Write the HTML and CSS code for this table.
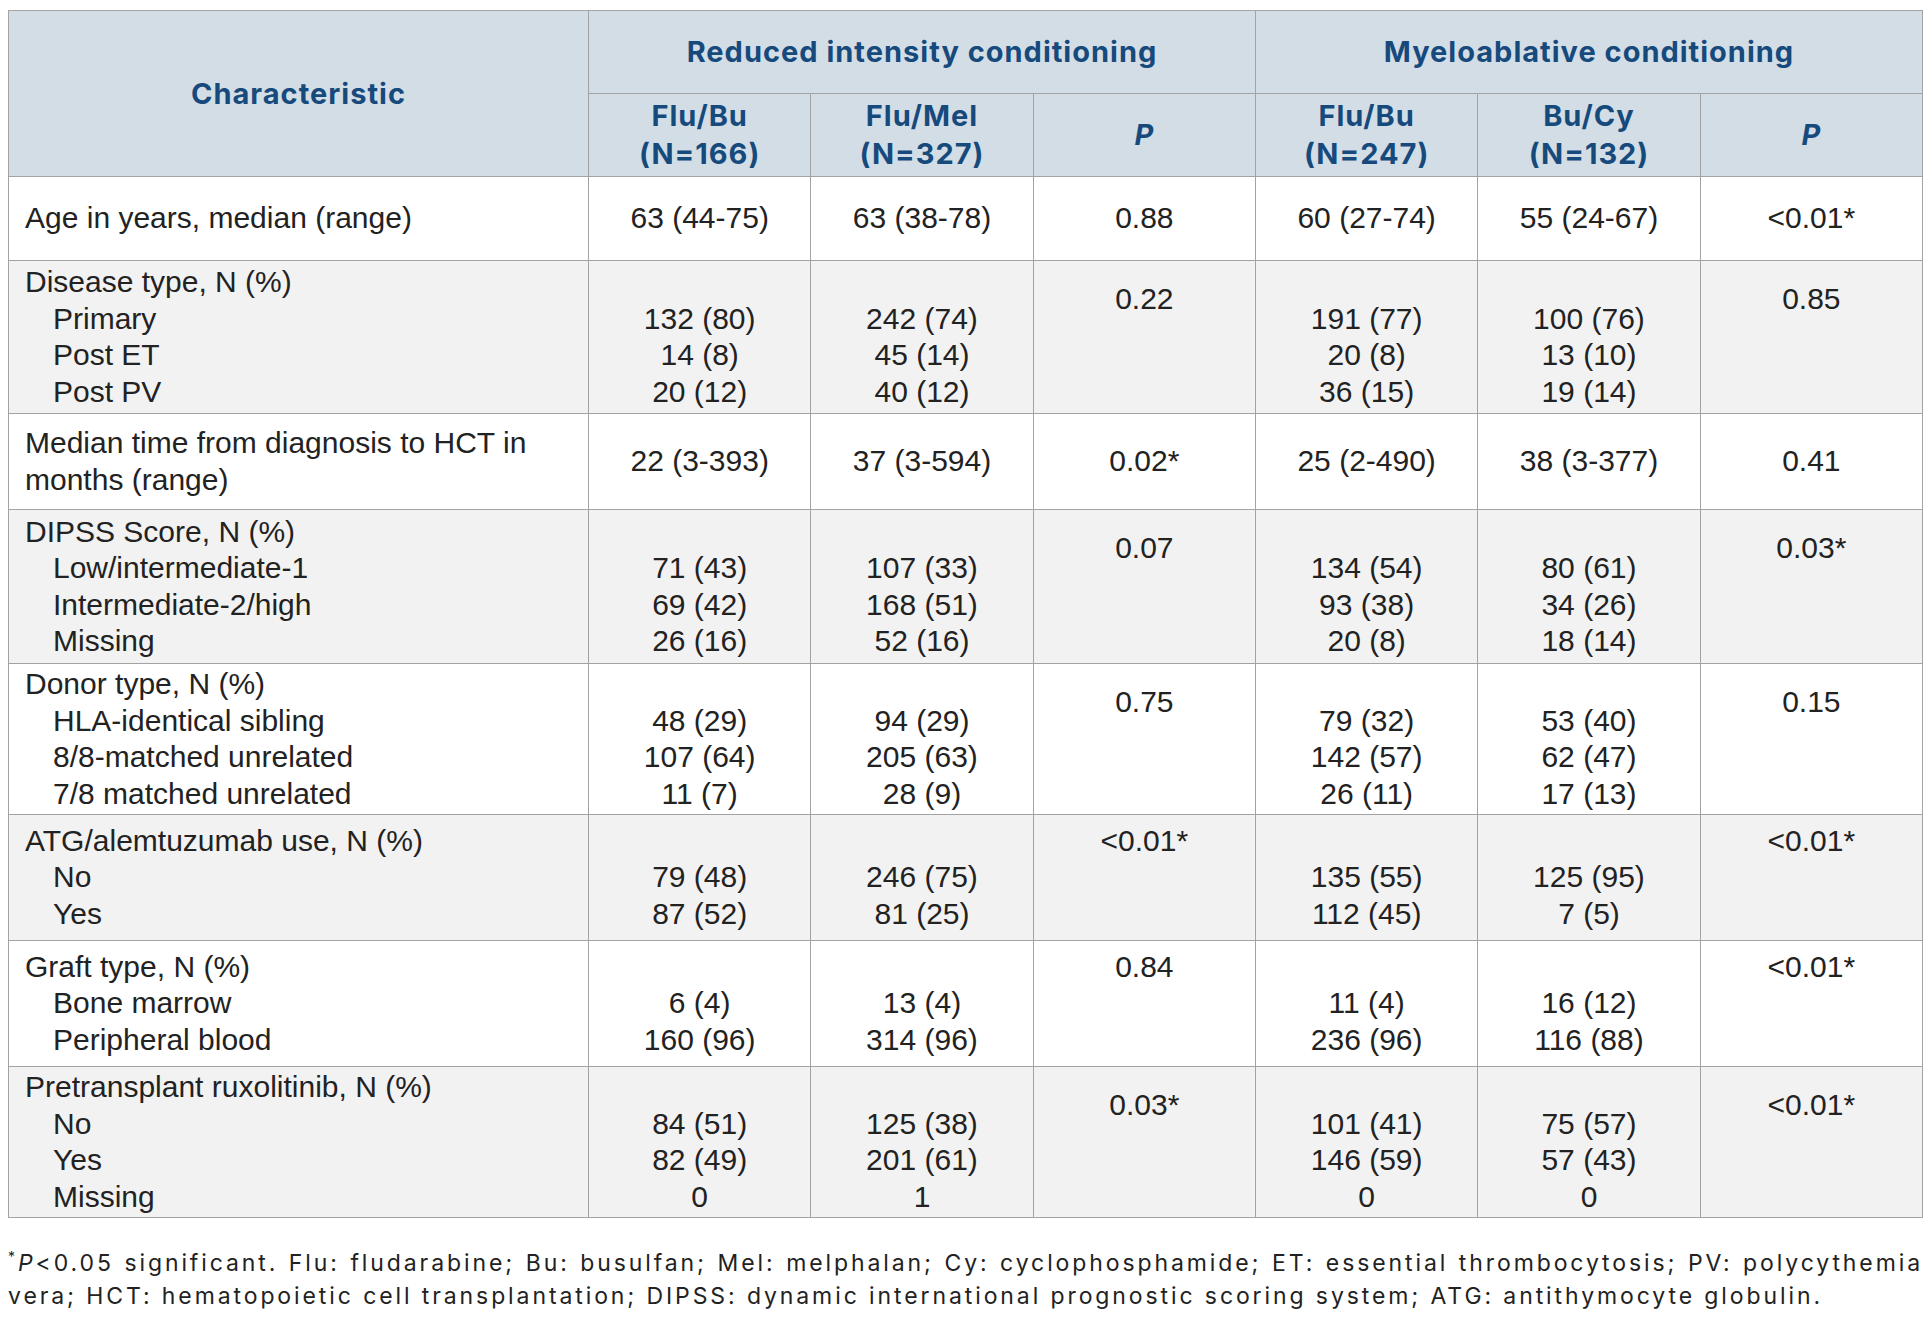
FILE: index.html
```html
<!DOCTYPE html>
<html lang="en">
<head>
<meta charset="utf-8">
<title>Patient characteristics</title>
<link rel="stylesheet" href="styles.css">
</head>
<body>
<div class="page">
<table class="tbl">
  <colgroup>
    <col class="c-char">
    <col><col><col><col><col><col>
  </colgroup>
  <thead>
    <tr class="h1">
      <th rowspan="2" class="th-char">Characteristic</th>
      <th colspan="3">Reduced intensity conditioning</th>
      <th colspan="3">Myeloablative conditioning</th>
    </tr>
    <tr class="h2">
      <th>Flu/Bu<br>(N=166)</th>
      <th>Flu/Mel<br>(N=327)</th>
      <th><i>P</i></th>
      <th>Flu/Bu<br>(N=247)</th>
      <th>Bu/Cy<br>(N=132)</th>
      <th><i>P</i></th>
    </tr>
  </thead>
  <tbody>
    <tr class="r-age white">
      <td class="lbl">Age in years, median (range)</td>
      <td>63 (44-75)</td>
      <td>63 (38-78)</td>
      <td class="pv-c">0.88</td>
      <td>60 (27-74)</td>
      <td>55 (24-67)</td>
      <td class="pv-c">&lt;0.01*</td>
    </tr>
    <tr class="r-dis grey">
      <td class="lbl">Disease type, N (%)<br><span class="sub">Primary</span><br><span class="sub">Post ET</span><br><span class="sub">Post PV</span></td>
      <td><br>132 (80)<br>14 (8)<br>20 (12)</td>
      <td><br>242 (74)<br>45 (14)<br>40 (12)</td>
      <td class="pv pv-low">0.22</td>
      <td><br>191 (77)<br>20 (8)<br>36 (15)</td>
      <td><br>100 (76)<br>13 (10)<br>19 (14)</td>
      <td class="pv pv-low">0.85</td>
    </tr>
    <tr class="r-med white">
      <td class="lbl">Median time from diagnosis to HCT in<br>months (range)</td>
      <td>22 (3-393)</td>
      <td>37 (3-594)</td>
      <td class="pv-c">0.02*</td>
      <td>25 (2-490)</td>
      <td>38 (3-377)</td>
      <td class="pv-c">0.41</td>
    </tr>
    <tr class="r-dip grey">
      <td class="lbl">DIPSS Score, N (%)<br><span class="sub">Low/intermediate-1</span><br><span class="sub">Intermediate-2/high</span><br><span class="sub">Missing</span></td>
      <td><br>71 (43)<br>69 (42)<br>26 (16)</td>
      <td><br>107 (33)<br>168 (51)<br>52 (16)</td>
      <td class="pv pv-low">0.07</td>
      <td><br>134 (54)<br>93 (38)<br>20 (8)</td>
      <td><br>80 (61)<br>34 (26)<br>18 (14)</td>
      <td class="pv pv-low">0.03*</td>
    </tr>
    <tr class="r-don white">
      <td class="lbl">Donor type, N (%)<br><span class="sub">HLA-identical sibling</span><br><span class="sub">8/8-matched unrelated</span><br><span class="sub">7/8 matched unrelated</span></td>
      <td><br>48 (29)<br>107 (64)<br>11 (7)</td>
      <td><br>94 (29)<br>205 (63)<br>28 (9)</td>
      <td class="pv pv-low">0.75</td>
      <td><br>79 (32)<br>142 (57)<br>26 (11)</td>
      <td><br>53 (40)<br>62 (47)<br>17 (13)</td>
      <td class="pv pv-low">0.15</td>
    </tr>
    <tr class="r-atg grey">
      <td class="lbl">ATG/alemtuzumab use, N (%)<br><span class="sub">No</span><br><span class="sub">Yes</span></td>
      <td><br>79 (48)<br>87 (52)</td>
      <td><br>246 (75)<br>81 (25)</td>
      <td class="pv pv-top">&lt;0.01*</td>
      <td><br>135 (55)<br>112 (45)</td>
      <td><br>125 (95)<br>7 (5)</td>
      <td class="pv pv-top">&lt;0.01*</td>
    </tr>
    <tr class="r-gra white">
      <td class="lbl">Graft type, N (%)<br><span class="sub">Bone marrow</span><br><span class="sub">Peripheral blood</span></td>
      <td><br>6 (4)<br>160 (96)</td>
      <td><br>13 (4)<br>314 (96)</td>
      <td class="pv pv-top">0.84</td>
      <td><br>11 (4)<br>236 (96)</td>
      <td><br>16 (12)<br>116 (88)</td>
      <td class="pv pv-top">&lt;0.01*</td>
    </tr>
    <tr class="r-rux grey">
      <td class="lbl">Pretransplant ruxolitinib, N (%)<br><span class="sub">No</span><br><span class="sub">Yes</span><br><span class="sub">Missing</span></td>
      <td><br>84 (51)<br>82 (49)<br>0</td>
      <td><br>125 (38)<br>201 (61)<br>1</td>
      <td class="pv pv-low">0.03*</td>
      <td><br>101 (41)<br>146 (59)<br>0</td>
      <td><br>75 (57)<br>57 (43)<br>0</td>
      <td class="pv pv-low">&lt;0.01*</td>
    </tr>
  </tbody>
</table>
<p class="note"><sup>*</sup><i>P</i>&lt;0.05 significant. Flu: fludarabine; Bu: busulfan; Mel: melphalan; Cy: cyclophosphamide; ET: essential thrombocytosis; PV: polycythemia vera; HCT: hematopoietic cell transplantation; DIPSS: dynamic international prognostic scoring system; ATG: antithymocyte globulin.</p>
</div>
</body>
</html>
```
FILE: styles.css
```css
html, body {
  margin: 0;
  padding: 0;
  background: #ffffff;
}

.page {
  padding: 10px 10px 0 8px;
  width: 1915px;
}

.tbl {
  width: 1915px;
  border-collapse: collapse;
  table-layout: fixed;
  font-family: "Liberation Sans", Arial, sans-serif;
  font-size: 30px;
  color: #222222;
}

.c-char {
  width: 580px;
}

.tbl th,
.tbl td {
  border: 1px solid #a3a3a3;
}

.tbl th {
  background: #d3dde6;
  color: #174a7c;
  font-family: "Inter", "Open Sans", sans-serif;
  font-weight: 700;
  font-size: 29px;
  letter-spacing: 1px;
  line-height: 38px;
  text-align: center;
  vertical-align: middle;
  padding: 0 4px;
}

.tbl th i {
  font-style: italic;
}

.h1 { height: 83px; }
.h2 { height: 83px; }

.tbl td {
  text-align: center;
  vertical-align: middle;
  line-height: 36.5px;
  padding: 0 4px;
  white-space: nowrap;
}

.tbl td.lbl {
  text-align: left;
  padding-left: 16px;
}

.sub {
  padding-left: 28px;
}

.tbl td.pv {
  vertical-align: top;
}

.tbl td.pv-low {
  padding-top: 20px;
}

.tbl td.pv-top {
  padding-top: 8px;
}

.white { background: #ffffff; }
.grey { background: #f2f2f2; }

.r-age { height: 84px; }
.r-dis { height: 153px; }
.r-med { height: 96px; }
.r-dip { height: 154px; }
.r-don { height: 151px; }
.r-atg { height: 126px; }
.r-gra { height: 126px; }
.r-rux { height: 151px; }

.note {
  margin: 29px 0 0 0;
  width: 1915px;
  font-family: "Inter", "Open Sans", sans-serif;
  font-size: 23px;
  letter-spacing: 2.9px;
  line-height: 33px;
  color: #222222;
  text-align: justify;
}

.note sup {
  font-size: 14px;
  line-height: 0;
  letter-spacing: 0;
  margin-right: 3px;
  vertical-align: 9px;
}
```
